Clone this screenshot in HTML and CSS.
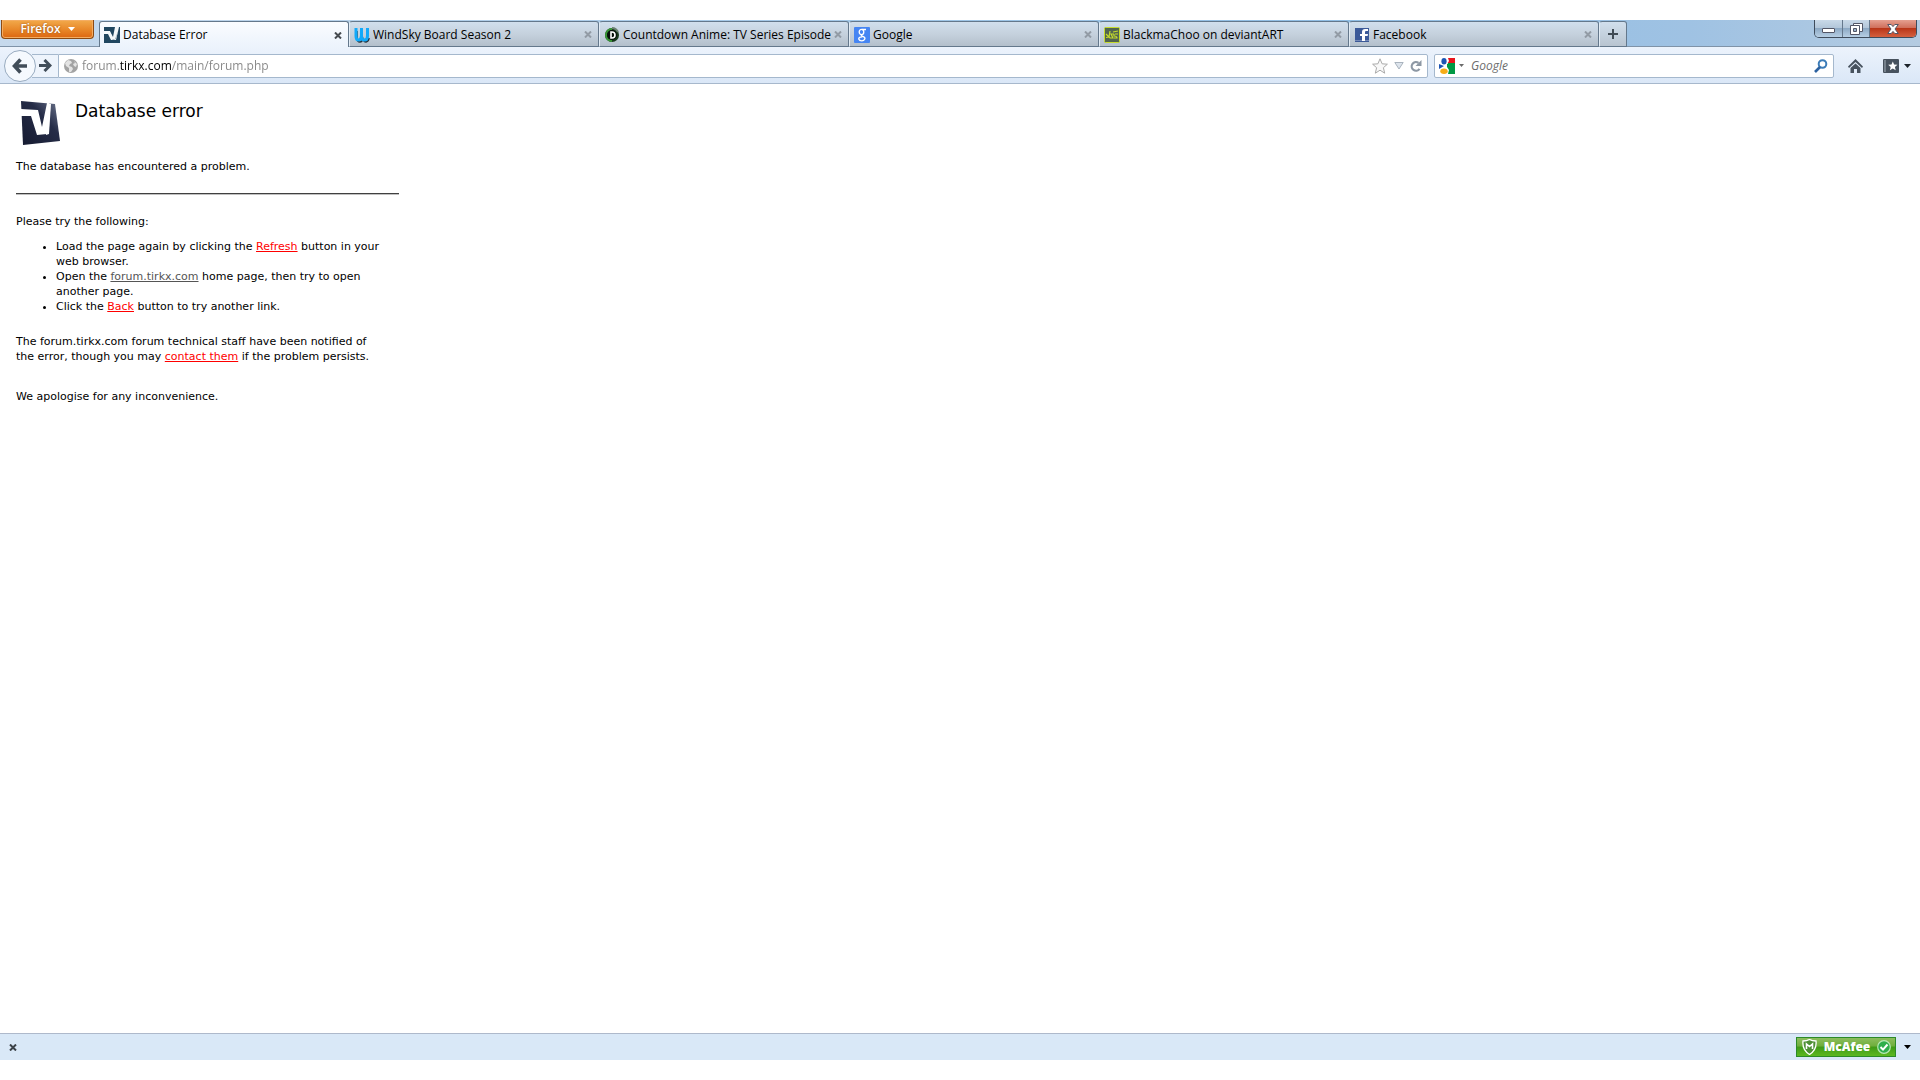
FILE: index.html
```
<!DOCTYPE html>
<html lang="en">
<head>
<meta charset="utf-8">
<title>Database Error</title>
<link rel="stylesheet" href="styles.css">
</head>
<body>
<div class="window">
  <header class="titlebar">
    <button class="app-menu" type="button">Firefox <svg width="7" height="4" viewBox="0 0 7 4"><path d="M0 0h7L3.500 4z" fill="#fff"/></svg></button>
    <nav class="tabs" aria-label="Tabs">
      <div class="tab active">
        <svg class="favicon" width="16" height="16" viewBox="0 0 16 16"><path fill="#214760" d="M0 0h16v16H0z"/><path fill="#f4f8fa" d="M0 4h6l3 6 2-10h4l-3 13H7L4 7H0z"/><path fill="#214760" d="M7 0h3v1L8 7 6 3z"/><path fill="#9db2bd" d="M9 13l3-1 2-8-3 8H8z"/></svg>
        <a class="tab-label" href="#">Database Error</a>
        <button class="tab-close" type="button" aria-label="Close tab"><svg width="8" height="7" viewBox="0 0 8 7"><path d="M1 .5l6 6M7 .5l-6 6"/></svg></button>
      </div>
      <div class="tab">
        <svg class="favicon" width="16" height="16" viewBox="0 0 16 16"><path d="M3 4v7q0 4 3 4 2 0 3-3 1 3 3 3 3-1 3-4" fill="none" stroke="#26343d" stroke-width="1.500"/><path d="M2 1v8q0 4 2.500 4T7.500 9V1M7.500 9q0 4 3 4T13.500 9V1" fill="none" stroke="#12a9fa" stroke-width="3"/></svg>
        <a class="tab-label" href="#">WindSky Board Season 2</a>
        <button class="tab-close" type="button" aria-label="Close tab"><svg width="8" height="7" viewBox="0 0 8 7"><path d="M1 .5l6 6M7 .5l-6 6"/></svg></button>
      </div>
      <div class="tab">
        <svg class="favicon" width="16" height="16" viewBox="0 0 16 16"><circle cx="8" cy="8" r="7" fill="#17371b"/><path d="M8 2a6 6 0 0 0 0 12" fill="none" stroke="#389636" stroke-width="2"/><path d="M8 1a7 7 0 0 1 6 4" fill="none" stroke="#6b7f72" stroke-width="2"/><circle cx="8" cy="8" r="5" fill="#07100a"/><path d="M7 5v6h1q3 0 3-3T8 5z" fill="none" stroke="#fff" stroke-width="1.600"/></svg>
        <a class="tab-label" href="#">Countdown Anime: TV Series Episode</a>
        <button class="tab-close" type="button" aria-label="Close tab"><svg width="8" height="7" viewBox="0 0 8 7"><path d="M1 .5l6 6M7 .5l-6 6"/></svg></button>
      </div>
      <div class="tab">
        <svg class="favicon" width="16" height="16" viewBox="0 0 16 16"><rect width="16" height="16" rx="1" fill="#4585f3"/><g fill="none" stroke="#fff" stroke-width="1.300"><ellipse cx="7.500" cy="5" rx="2.300" ry="2.600"/><path d="M8 2.500h4M8 7.600c-1.600 1 0 1.400 1.400 2 3 1.600 1 4.200-1.600 4.200-3.400 0-4-2.800-1.500-3.700l2-.3"/></g></svg>
        <a class="tab-label" href="#">Google</a>
        <button class="tab-close" type="button" aria-label="Close tab"><svg width="8" height="7" viewBox="0 0 8 7"><path d="M1 .5l6 6M7 .5l-6 6"/></svg></button>
      </div>
      <div class="tab">
        <svg class="favicon" width="16" height="16" viewBox="0 0 16 16"><rect x=".5" y=".5" width="15" height="15" rx="1" fill="#53654f" stroke="#c6dc2c"/><path d="M2 10.500l3-.5 1-6M2 7l4 4h3l-2-4h3M9 5l5-1M11 7h3M10 7v2q3 0 3 2h-3" fill="none" stroke="#c6dc2c" stroke-width="1.200"/></svg>
        <a class="tab-label" href="#">BlackmaChoo on deviantART</a>
        <button class="tab-close" type="button" aria-label="Close tab"><svg width="8" height="7" viewBox="0 0 8 7"><path d="M1 .5l6 6M7 .5l-6 6"/></svg></button>
      </div>
      <div class="tab">
        <svg class="favicon" width="16" height="16" viewBox="0 0 16 16"><path fill="#3b5998" d="M1 1h14v14H1z"/><path fill="#7489b8" d="M1 13h14v1H1z"/><path fill="#fff" d="M8 14V9H6V7h2V5q0-3 3-3h3v2h-2q-1 0-1 1v2h3l-.4 2H11v5z"/></svg>
        <a class="tab-label" href="#">Facebook</a>
        <button class="tab-close" type="button" aria-label="Close tab"><svg width="8" height="7" viewBox="0 0 8 7"><path d="M1 .5l6 6M7 .5l-6 6"/></svg></button>
      </div>
      <button class="new-tab" type="button" aria-label="New tab"><svg width="10" height="10" viewBox="0 0 10 10"><path d="M4 0h2v4h4v2H6v4H4V6H0V4h4z" fill="#404b55"/></svg></button>
    </nav>
    <div class="window-controls">
      <button class="control minimize" type="button" aria-label="Minimize"><svg width="13" height="6" viewBox="0 0 13 6"><rect x=".5" y=".5" width="12" height="4" rx=".5" fill="#fff" stroke="#535666"/></svg></button>
      <button class="control restore" type="button" aria-label="Restore"><svg width="13" height="12" viewBox="0 0 13 12"><path fill="#fff" stroke="#535666" d="M3.500.5h9v8h-9z"/><path fill="#fff" stroke="#535666" d="M.5 2.500h9v9h-9z"/><path fill="#9bb4cc" stroke="#535666" d="M3.500 5.500h3v3h-3z"/></svg></button>
      <button class="control close" type="button" aria-label="Close window"><svg width="12" height="10" viewBox="0 0 12 10"><path fill="#fff" stroke="#535666" d="M.7.5h3.500L6 2.600 7.800.5h3.500L8 5l3.300 4.500H7.800L6 7.400 4.200 9.500H.7L4 5z"/></svg></button>
    </div>
  </header>

  <div class="toolbar">
    <button class="back" type="button" aria-label="Back"><svg width="16" height="16" viewBox="0 0 16 16"><path d="M8.500 1.500L2.500 8l6 6.500M3 8h12" fill="none" stroke="#414d59" stroke-width="3.600"/></svg></button>
    <button class="forward" type="button" aria-label="Forward"><svg width="13" height="13" viewBox="0 0 13 13"><path d="M5.500 1l5.500 5.500L5.500 12M0 6.500h11" fill="none" stroke="#414d59" stroke-width="3"/></svg></button>
    <div class="address-bar">
      <svg width="14" height="14" viewBox="0 0 14 14"><circle cx="7" cy="7" r="7" fill="#a3a3a3"/><path fill="#e3e3e3" d="M1 4l3-3 3 1 1 2-2 1-1 2 3 1 1 2-2 3H5V9L2 7zM10 2l3 3-1 3-2-1-1-2 2-1z"/></svg>
      <input class="address" type="text" aria-label="Address" value="forum.tirkx.com/main/forum.php">
      <button class="icon-button" type="button" aria-label="Bookmark this page"><svg width="16" height="16" viewBox="0 0 16 16"><path d="M8 .8l2.100 5 5.300.4-4 3.500 1.300 5.500L8 12.200l-4.700 3 1.300-5.500-4-3.500 5.300-.4z" fill="#f8f8f8" stroke="#aaa"/></svg></button>
      <button class="icon-button" type="button" aria-label="Show history"><svg width="10" height="8" viewBox="0 0 10 8"><path d="M.8.500h8.400L5 7z" fill="#dde4ec" stroke="#a9b3be"/></svg></button>
      <button class="icon-button" type="button" aria-label="Reload"><svg width="12" height="12" viewBox="0 0 12 12"><path d="M8.500 2.800A4.300 4.300 0 1 0 9.500 8.800" fill="none" stroke="#8d98a4" stroke-width="2.200"/><path d="M11.500 0v6H5.500z" fill="#8d98a4"/></svg></button>
    </div>
    <div class="search-bar">
      <svg width="16" height="16" viewBox="0 0 16 16"><path fill="#fff" d="M0 0h16v16H0z"/><path fill="#e8141c" d="M8 0h8v5H8z"/><path fill="#009844" d="M9 5h7v11H9z"/><circle cx="11" cy="9" r="4" fill="#009844"/><path fill="#fff" d="M7 0h2l1 3-2 3v3l2 3-1 4H7z"/><ellipse cx="5" cy="3.300" rx="2.600" ry="3.300" fill="#1c55b4"/><path fill="#1c55b4" d="M0 6l5 2-5 3z"/><ellipse cx="5" cy="13.200" rx="3.700" ry="2.700" fill="#f6ac16"/></svg>
      <svg class="engine-caret" width="5" height="3" viewBox="0 0 5 3"><path d="M0 0h5L2.500 3z" fill="#6a6a6a"/></svg>
      <input class="search" type="text" aria-label="Search" placeholder="Google">
      <button class="icon-button" type="button" aria-label="Search"><svg width="14" height="14" viewBox="0 0 14 14"><circle cx="8.500" cy="5" r="3.800" fill="none" stroke="#3c7cb8" stroke-width="2"/><path d="M6 8l-5 5" stroke="#2d62a0" stroke-width="2.600"/></svg></button>
    </div>
    <button class="icon-button home" type="button" aria-label="Home"><svg width="15" height="14" viewBox="0 0 15 14"><path d="M0 7.500L7.500 0 15 7.500 14 9 7.500 3 1 9z" fill="#47525e"/><path d="M2.500 9l5-4.600 5 4.600v5H9v-4H6v4H2.500z" fill="#47525e"/></svg></button>
    <button class="icon-button bookmarks" type="button" aria-label="Bookmarks"><svg width="16" height="14" viewBox="0 0 16 14"><rect width="16" height="14" rx="1" fill="#47525e"/><path fill="#75808b" d="M1 1h2v12H1z"/><path fill="#fff" d="M9.800 2.500l1.300 3 3.300.3-2.500 2.200.8 3.300-2.900-1.800-2.900 1.800.8-3.300L5.200 5.800l3.300-.3z"/></svg><svg width="7" height="4" viewBox="0 0 7 4"><path d="M0 0h7L3.500 4z" fill="#1b2229"/></svg></button>
  </div>

  <main class="page">
    <div class="heading">
      <svg width="40" height="46" viewBox="0 0 40 46"><defs><linearGradient id="steel" x1="0" y1="1" x2="1" y2="0"><stop offset="0" stop-color="#151a30"/><stop offset=".6" stop-color="#252c47"/><stop offset="1" stop-color="#707991"/></linearGradient></defs><path fill="url(#steel)" d="M0 1l34 3 5 37-37 4z"/><path fill="#fff" d="M0 9l17 1 4 17 5-24h2l-2 31-10 1L10 16H0z"/><path fill="#fff" d="M27 3l3 1-2 30-3 1z"/></svg>
      <h1>Database error</h1>
    </div>
    <p class="intro">The database has encountered a problem.</p>
    <hr>
    <p>Please try the following:</p>
    <ul>
      <li>Load the page again by clicking the <a href="#">Refresh</a> button in your web browser.</li>
      <li>Open the <a class="visited" href="#">forum.tirkx.com</a> home page, then try to open another page.</li>
      <li>Click the <a href="#">Back</a> button to try another link.</li>
    </ul>
    <p class="notice">The forum.tirkx.com forum technical staff have been notified of the error, though you may <a href="#">contact them</a> if the problem persists.</p>
    <p>We apologise for any inconvenience.</p>
  </main>

  <footer class="addon-bar">
    <button class="icon-button" type="button" aria-label="Close add-on bar"><svg width="8" height="7" viewBox="0 0 8 7"><path d="M1 .5l6 6M7 .5l-6 6" stroke="#3c4248" stroke-width="2"/></svg></button>
    <div class="addon">
      <button class="mcafee" type="button"><svg width="15" height="16" viewBox="0 0 15 16"><path d="M1 2q4 0 6.500-1.500Q10 2 14 2q1 9-6.500 13.500Q0 11 1 2z" fill="#4e8f35" stroke="#fff" stroke-width="1.300"/><path d="M4.500 10V5l3 2.500 3-2.500v5" fill="none" stroke="#fff" stroke-width="1.600"/></svg><span>McAfee</span><svg width="14" height="14" viewBox="0 0 14 14"><circle cx="7" cy="7" r="6.300" fill="#2fae4b" stroke="#b8e8b5" stroke-width="1.200"/><path d="M3.500 7l2.500 2.600L10.500 4.500" fill="none" stroke="#fff" stroke-width="2"/></svg></button>
      <button class="icon-button" type="button" aria-label="McAfee options"><svg width="7" height="4" viewBox="0 0 7 4"><path d="M0 0h7L3.500 4z" fill="#000"/></svg></button>
    </div>
  </footer>
</div>
</body>
</html>
```
FILE: styles.css
```
* { box-sizing: border-box; }

body {
  margin: 0;
  background: #fff;
  color: #000;
  font: 12px/16px "Open Sans", "Noto Sans", sans-serif;
}

button, input {
  margin: 0;
  padding: 0;
  border: 0;
  background: none;
  font: inherit;
  color: inherit;
}

button {
  display: flex;
  align-items: center;
  justify-content: center;
}

input { outline: 0; }
svg { flex: none; display: block; }

.window {
  display: flex;
  flex-direction: column;
  min-height: 100vh;
  padding: 20px 0;
}

/* Title bar */
.titlebar {
  display: flex;
  align-items: flex-start;
  height: 27px;
  padding: 0 3px 0 1px;
  background: linear-gradient(to right, #c6d9ec 0, #a9cbe9 35%, #8fbde4 70%, #9fc2e3 88%, #b4cbe1 100%);
  border-bottom: 1px solid #7f93a8;
}

.app-menu {
  gap: 7px;
  width: 93px;
  height: 19px;
  border: 1px solid #8c4a12;
  border-top: 0;
  border-radius: 0 0 4px 4px;
  background: linear-gradient(#f2aa4c, #e98a2b 50%, #dc6611);
  box-shadow: inset 0 0 0 1px #f4ad62;
  color: #fff;
  font-weight: 600;
  text-shadow: 0 0 2px #8c4a12;
}

.tabs {
  display: flex;
  flex: 1;
  min-width: 0;
  height: 27px;
  padding: 1px 0 0 5px;
}

.tab {
  display: flex;
  align-items: center;
  flex: 0 1 250px;
  min-width: 0;
  gap: 3px;
  height: 26px;
  padding: 1px 6px 0 4px;
  border: 1px solid #64788c;
  border-left-color: #e3edf6;
  border-radius: 3px 3px 0 0;
  background: linear-gradient(#d1dfed, #c5d1dd 50%, #b3bfcb);
}

.tab.active {
  border-color: #64788c;
  border-bottom: 0;
  background: linear-gradient(#fafcff, #ecf3fc);
}

.tab-label {
  flex: 1;
  overflow: hidden;
  color: #000;
  text-decoration: none;
  white-space: nowrap;
}

.tab-close path {
  stroke: #929ba5;
  stroke-width: 2;
}

.tab.active .tab-close path { stroke: #464b50; }

.new-tab {
  width: 28px;
  height: 26px;
  border: 1px solid #64788c;
  border-left-color: #e3edf6;
  border-radius: 3px 3px 0 0;
  background: linear-gradient(#d1dfed, #b8c4d0);
}

.window-controls {
  display: flex;
  height: 18px;
  border: 1px solid #3f4c5c;
  border-top: 0;
  border-radius: 0 0 5px 5px;
  overflow: hidden;
}

.control {
  width: 27px;
  border-right: 1px solid #65788c;
  background: linear-gradient(#c9d9e8, #b3c7da 45%, #8da9c4 50%, #b7cfe4);
}

.minimize { padding-top: 4px; width: 28px; }

.control.close {
  width: 46px;
  border-right: 0;
  background: linear-gradient(#e5a090, #d0705c 45%, #b93618 50%, #d5603f);
}

/* Navigation toolbar */
.toolbar {
  display: flex;
  align-items: center;
  height: 37px;
  padding: 1px 9px 0 4px;
  background: linear-gradient(#ecf3fc, #dae7f7);
  border-bottom: 1px solid #a7b8cc;
}

.back {
  z-index: 1;
  width: 32px;
  height: 32px;
  border: 1px solid #98abc0;
  border-radius: 50%;
  background: #f5f9fe;
}

.forward {
  width: 26px;
  height: 24px;
  margin-left: -4px;
  border: 1px solid #a5b8cd;
  border-width: 1px 0;
  background: #eef4fc;
}

.address-bar, .search-bar {
  display: flex;
  align-items: center;
  height: 24px;
  border: 1px solid #a5b8cd;
  background: #fff;
}

.address-bar {
  flex: 1;
  gap: 6px;
  min-width: 0;
  padding: 0 5px;
  border-radius: 0 2px 2px 0;
}

/* The domain is emphasised inside the address */
.address {
  flex: 1;
  min-width: 0;
  margin-left: -2px;
  background: linear-gradient(to right, #858585 37px, #000 37px, #000 89px, #858585 89px);
  -webkit-background-clip: text;
  background-clip: text;
  color: transparent;
  caret-color: #000;
}

.search-bar {
  flex: 0 1 400px;
  gap: 4px;
  margin-left: 6px;
  padding: 0 5px 0 4px;
  border-radius: 2px;
}

.search {
  flex: 1;
  min-width: 0;
  margin-left: 3px;
}

.search::placeholder {
  color: #6d6d6d;
  font-style: italic;
  opacity: 1;
}

.home { margin-left: 14px; }
.bookmarks { gap: 5px; margin-left: 20px; }

/* Error page */
.page {
  flex: 1;
  max-width: 415px;
  padding: 16px;
  font: 11px/15px Verdana, "DejaVu Sans", sans-serif;
}

.heading {
  display: flex;
  gap: 14px;
  padding-left: 5px;
}

h1 {
  margin: 0;
  font-size: 17px;
  font-weight: 400;
  line-height: 22px;
}

.page p { margin: 0; }
.page .intro { margin-top: 13px; }

hr {
  height: 2px;
  margin: 19px 0;
  border: 0;
  border-top: 1px solid #404040;
  border-bottom: 1px solid #c0c0c0;
}

ul {
  margin: 10px 0 20px;
  padding-left: 40px;
}

.page a { color: #f00; }
.page a.visited { color: #555; }

.page .notice {
  max-width: 370px;
  margin-bottom: 25px;
}

/* Add-on bar */
.addon-bar {
  display: flex;
  align-items: center;
  justify-content: space-between;
  height: 27px;
  padding: 0 9px;
  background: #d9e8f7;
  border-top: 1px solid #aeb9cb;
}

.addon {
  display: flex;
  gap: 8px;
}

.mcafee {
  justify-content: space-between;
  width: 100px;
  height: 20px;
  padding: 0 4px 0 5px;
  border: 1px solid #2c8a28;
  background: linear-gradient(#8cbd5d, #6fae3c 45%, #3f9a17 50%, #5db820);
  color: #fff;
  font: 800 12px/16px "Open Sans", sans-serif;
}
```
